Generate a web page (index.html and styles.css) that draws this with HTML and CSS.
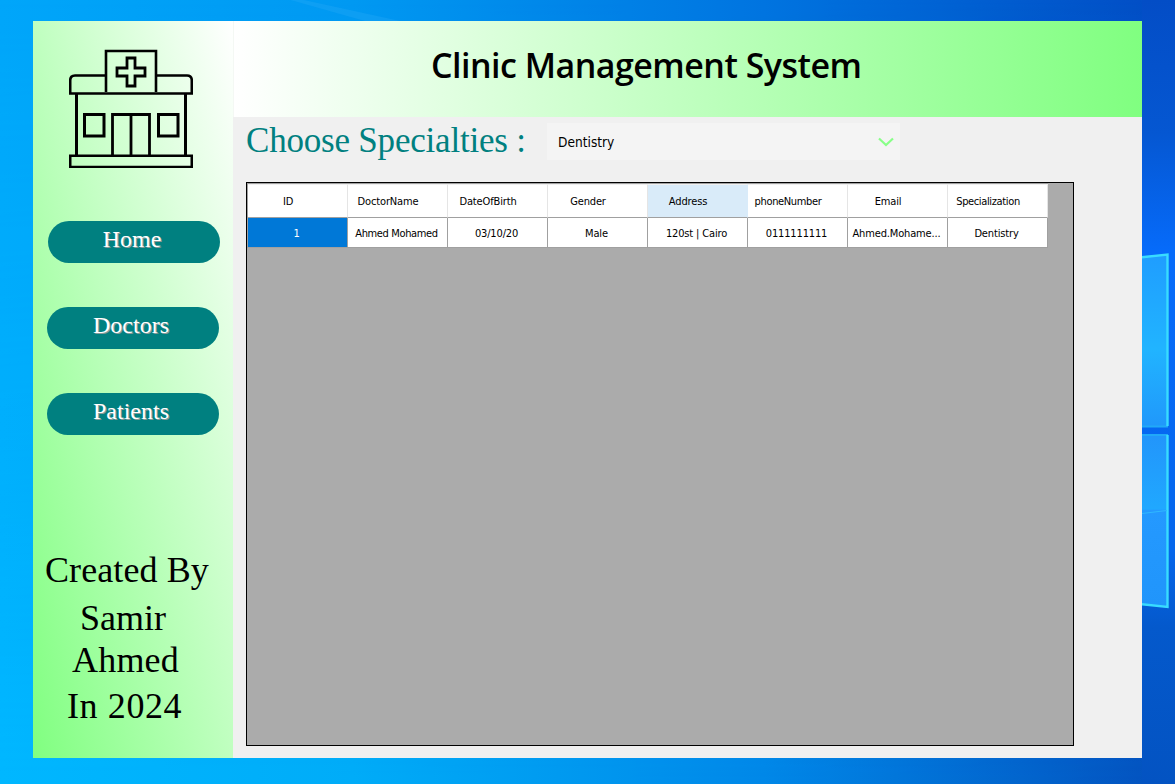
FILE: index.html
```html
<!DOCTYPE html>
<html lang="en">
<head>
<meta charset="utf-8">
<title>Clinic Management System</title>
<link rel="stylesheet" href="styles.css">
</head>
<body>
<svg class="wallpaper" viewBox="0 0 1175 784" aria-hidden="true">
  <defs>
    <linearGradient id="sky" x1="0" y1="0" x2="1" y2="0">
      <stop offset="0" stop-color="#00a6fa"/>
      <stop offset=".3" stop-color="#0099f2"/>
      <stop offset=".65" stop-color="#0074e0"/>
      <stop offset="1" stop-color="#024cc4"/>
    </linearGradient>
    <linearGradient id="low" x1="0" y1="0" x2="1" y2="0">
      <stop offset="0" stop-color="#00b7ff"/>
      <stop offset=".3" stop-color="#00acf8"/>
      <stop offset=".65" stop-color="#0088e8"/>
      <stop offset="1" stop-color="#0350bd"/>
    </linearGradient>
    <linearGradient id="edge" x1="0" y1="0" x2="0" y2="1">
      <stop offset="0" stop-color="#034dc6"/>
      <stop offset=".17" stop-color="#0557d2"/>
      <stop offset=".32" stop-color="#066bfa"/>
      <stop offset=".7" stop-color="#0566ec"/>
      <stop offset=".8" stop-color="#0459cc"/>
      <stop offset="1" stop-color="#0353c2"/>
    </linearGradient>
    <linearGradient id="fade" x1="0" y1="0" x2="0" y2="1">
      <stop offset="0" stop-color="#000"/>
      <stop offset="1" stop-color="#fff"/>
    </linearGradient>
    <mask id="lower"><rect width="1175" height="784" fill="url(#fade)"/></mask>
    <linearGradient id="paneA" x1="0" y1="0" x2="0" y2="1">
      <stop offset="0" stop-color="#1f9dff"/>
      <stop offset=".55" stop-color="#21b4ff"/>
      <stop offset="1" stop-color="#2098fb"/>
    </linearGradient>
    <linearGradient id="paneB" x1="0" y1="0" x2="0" y2="1">
      <stop offset="0" stop-color="#2295fb"/>
      <stop offset=".43" stop-color="#20a8ff"/>
      <stop offset=".44" stop-color="#2499ff"/>
      <stop offset="1" stop-color="#2095fb"/>
    </linearGradient>
  </defs>
  <rect width="1175" height="784" fill="url(#sky)"/>
  <rect width="1175" height="784" fill="url(#low)" mask="url(#lower)"/>
  <path d="M280-3 365 21H400L290-3Z" fill="#26a8f6" opacity=".35"/>
  <rect x="1142" width="33" height="784" fill="url(#edge)"/>
  <path d="M1130 258.500 1167.500 254V426.500H1130Z" fill="url(#paneA)"/>
  <path d="M1130 434.500H1167.500V607.500L1130 603Z" fill="url(#paneB)"/>
  <path d="M1130 426.500H1168M1130 435H1168" stroke="#21a9f8" stroke-width="2"/>
  <path d="M1130 258.500 1167.500 254.500V426M1167.500 435V607L1130 603" fill="none" stroke="#38dcff" stroke-width="2.400"/>
  <path d="M1142 513.500 1167 510.500" stroke="#2fb8ff" stroke-width="1"/>
</svg>

<div class="window">
  <aside class="sidebar">
    <svg class="logo" viewBox="0 0 124 120" fill="none" stroke="#000" stroke-width="2.600">
      <path d="M37 44V3H87V44"/>
      <path d="M58 10H66V20H76V28H66V38H58V28H48V20H58Z" stroke-width="2.800"/>
      <path d="M37 27.500H6Q1.200 27.500 1.200 32.500V45.500H122.800V32.500Q122.800 27.500 118 27.500H87"/>
      <path d="M7.500 46V107M116.500 46V107" stroke-width="3"/>
      <path d="M15.500 66.500H35V88H15.500ZM89.500 66.500H109V88H89.500Z" stroke-width="3"/>
      <path d="M43.500 107V66.500H80.500V107M62 66.500V107" stroke-width="2.800"/>
      <path d="M1.200 107.800H122.800V119H1.200Z"/>
    </svg>
    <nav class="nav">
      <a class="nav-button nav-home">Home</a>
      <a class="nav-button">Doctors</a>
      <a class="nav-button">Patients</a>
    </nav>
    <div class="credits">
      <span class="credit by">Created By</span>
      <span class="credit first">Samir</span>
      <span class="credit last">Ahmed</span>
      <span class="credit year">In 2024</span>
    </div>
  </aside>
  <main class="main">
    <header class="header"><h1 class="title">Clinic Management System</h1></header>
    <div class="filter">
      <span class="filter-label">Choose Specialties :</span>
      <div class="combo">
        <span>Dentistry</span>
        <svg class="chevron" viewBox="0 0 16 10"><path d="M1 1.500 8 8 15 1.500" fill="none" stroke="#88ff88" stroke-width="2.200"/></svg>
      </div>
    </div>
    <div class="grid">
      <div class="row head">
        <div class="cell">ID</div><div class="cell">DoctorName</div><div class="cell">DateOfBirth</div><div class="cell">Gender</div><div class="cell hot">Address</div><div class="cell tight">phoneNumber</div><div class="cell">Email</div><div class="cell tight">Specialization</div>
      </div>
      <div class="row body">
        <div class="cell selected">1</div><div class="cell tight">Ahmed Mohamed</div><div class="cell">03/10/20</div><div class="cell">Male</div><div class="cell">120st | Cairo</div><div class="cell">0111111111</div><div class="cell">Ahmed.Mohame...</div><div class="cell">Dentistry</div>
      </div>
    </div>
  </main>
</div>
</body>
</html>
```

FILE: styles.css
```css
* { box-sizing: border-box; }
body {
  margin: 0;
  width: 1175px;
  height: 784px;
  padding: 21px 33px 26px;
  overflow: hidden;
  background: #0090ee;
  font-family: "DejaVu Sans Condensed", "DejaVu Sans", sans-serif;
  color: #000;
}
.wallpaper { position: absolute; left: 0; top: 0; width: 1175px; height: 784px; z-index: -1; }
.window { display: flex; width: 1109px; height: 737px; background: #f0f0f0; }

.sidebar {
  display: flex;
  flex-direction: column;
  width: 200px;
  height: 737px;
  padding-top: 27px;
  background: linear-gradient(to top right, #80ff80, #fff);
  font-family: "Liberation Serif", serif;
}
.logo { width: 124px; height: 120px; margin-left: 36px; flex: none; }
.nav { display: flex; flex-direction: column; gap: 44px; margin: 52.5px 0 0 13.5px; }
.nav-button {
  width: 172px;
  height: 42px;
  border-radius: 21px;
  background: #008080;
  color: #fff;
  font-size: 24px;
  line-height: 36px;
  text-align: center;
  text-shadow: 1px 1px 0 #8a9a9a;
  padding-right: 3px;
}
.nav-home { margin-left: 1px; }
.credits { display: flex; flex-direction: column; margin-top: 114.5px; }
.credit { font-size: 36px; line-height: 42px; white-space: nowrap; }
.by { margin-left: 12px; letter-spacing: .1px; }
.first { margin: 6px 0 0 47px; }
.last { margin-left: 39px; letter-spacing: .2px; }
.year { margin: 4px 0 0 34px; letter-spacing: .6px; }

.main { display: flex; flex-direction: column; width: 909px; }
.header {
  height: 96px;
  padding-top: 21px;
  border-left: 1px solid #f4f8f4;
  background: linear-gradient(to right, #fff, #80ff80);
}
.title {
  margin: 0 0 0 197px;
  font: 600 34px/46px "Open Sans", sans-serif;
  letter-spacing: -.52px;
  white-space: nowrap;
}
.filter { display: flex; height: 65px; padding: 6px 0 0 13px; }
.filter-label {
  width: 301px;
  margin-top: -3px;
  color: #008080;
  font: 35px/41px "Liberation Serif", serif;
  letter-spacing: -.2px;
  white-space: nowrap;
}
.combo {
  display: flex;
  align-items: center;
  justify-content: space-between;
  width: 353px;
  height: 37px;
  padding: 0 6px 0 11px;
  background: #f4f4f4;
  font-size: 13.6px;
}
.chevron { width: 16px; height: 10px; }
.grid {
  width: 828px;
  height: 564px;
  margin-left: 13px;
  border: 1px solid #000;
  background: #ababab;
  font-size: 11px;
  letter-spacing: -.15px;
}
.row { display: flex; width: 801px; height: 30px; border-left: 1px solid #a0a0a0; }
.head { height: 35px; border-top: 1px solid #a0a0a0; }
.cell {
  display: flex;
  align-items: center;
  justify-content: center;
  width: 100px;
  border-right: 1px solid #a0a0a0;
  border-bottom: 1px solid #a0a0a0;
  background: #fff;
  white-space: nowrap;
}
.head .cell { border-right-color: #e5e5e5; border-top: 1px solid #f0f0f0; padding-right: 19px; }
.body .cell { padding: 2px 2px 0 0; }
.head .hot { background: #d9ebf9; border-right-color: #d9ebf9; }
.cell.tight { letter-spacing: -.36px; }
.cell.selected { background: #0078d7; color: #fff; }
```
